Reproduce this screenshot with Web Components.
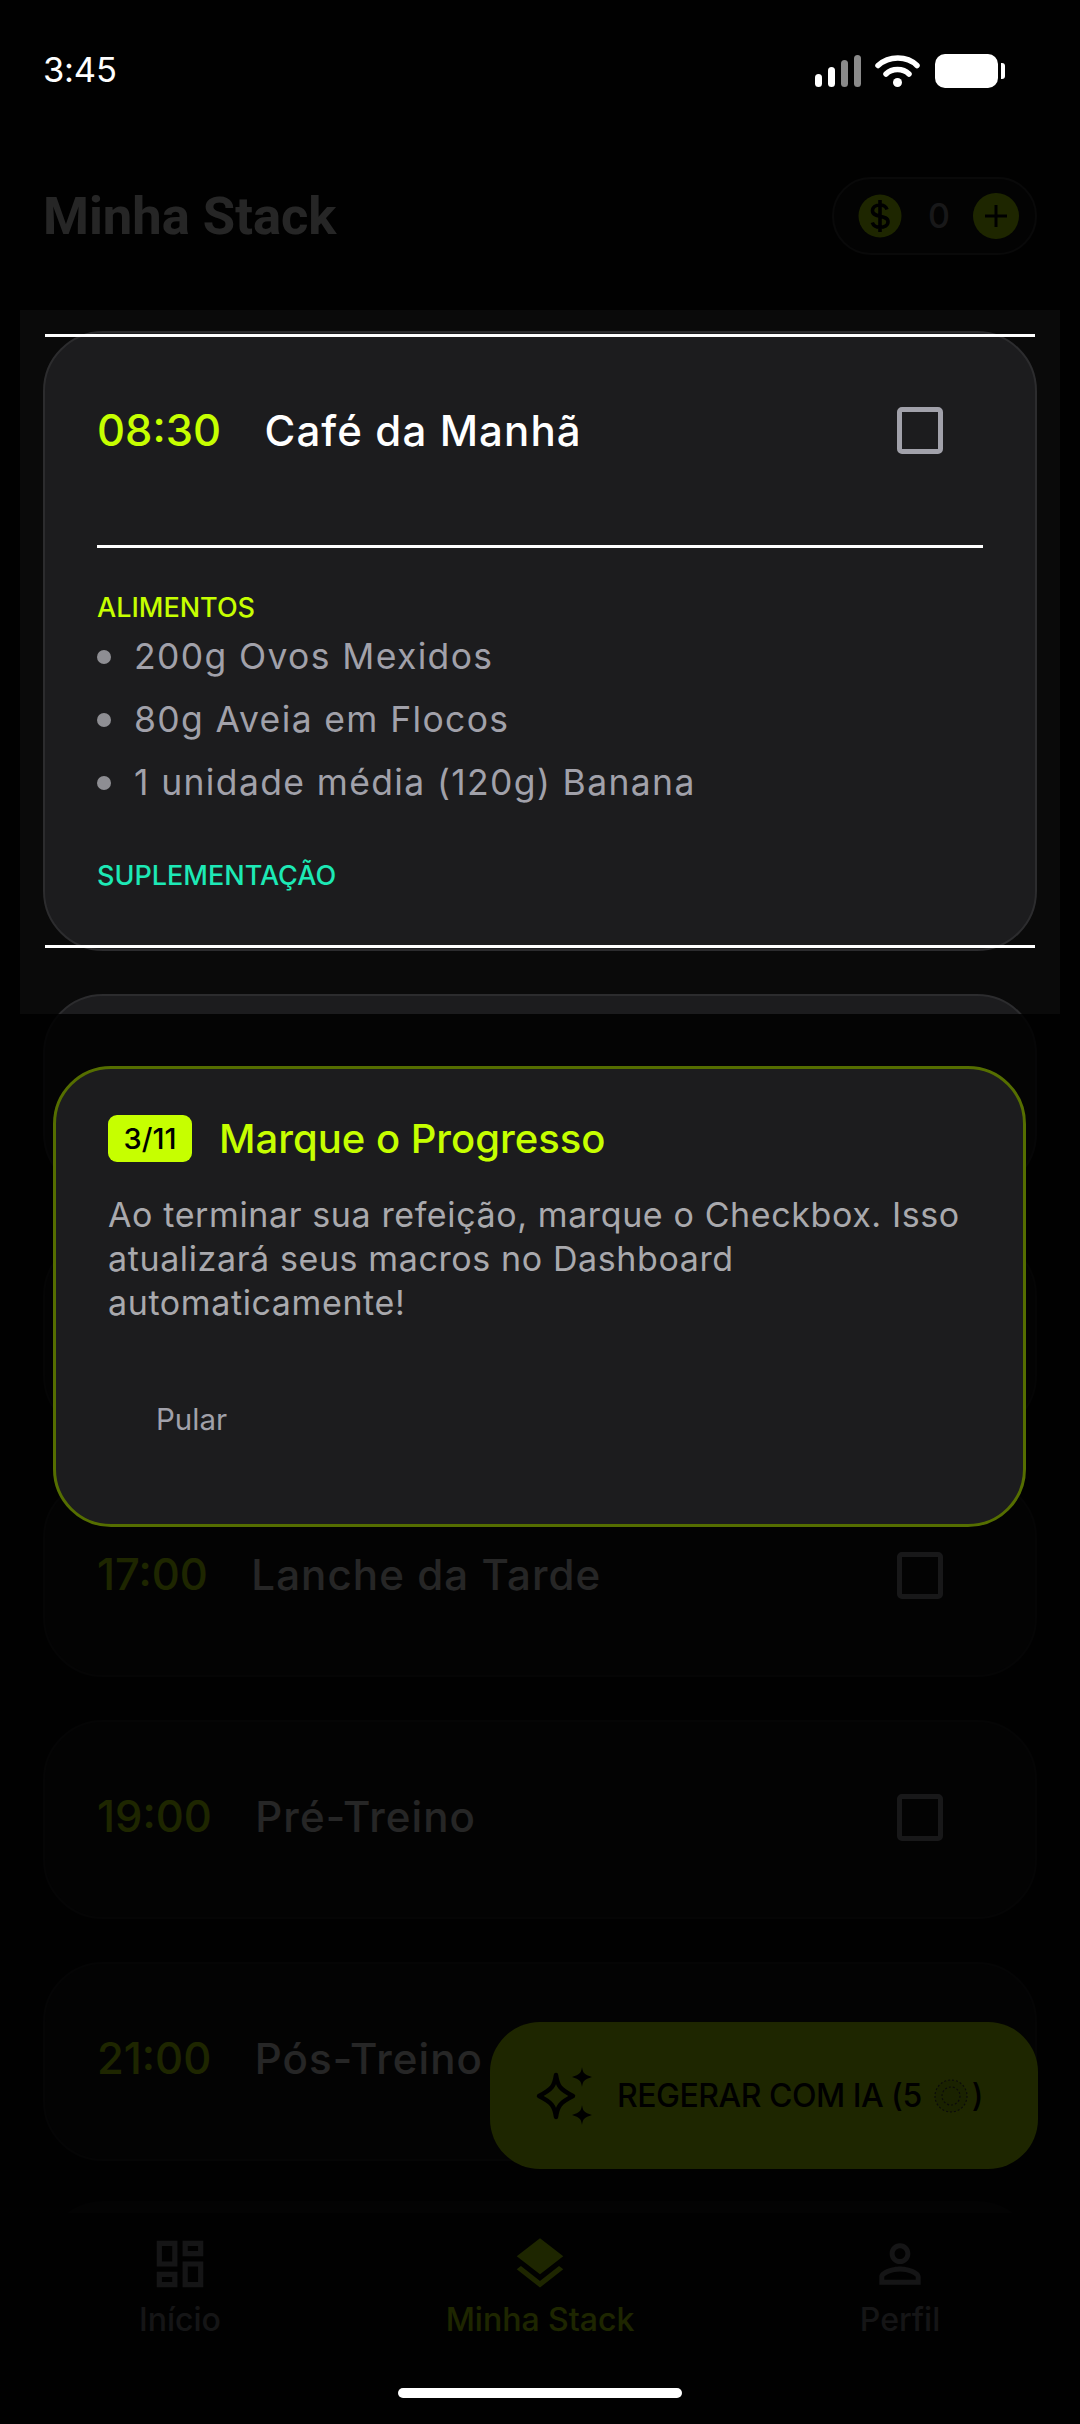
<!DOCTYPE html>
<html lang="pt-BR"><head><meta charset="utf-8"><title>Minha Stack</title>
<style>
html,body{margin:0;padding:0;background:#0a0a0a}
body{font-family:Inter,"Noto Sans",sans-serif}
</style></head><body>
<app-screen>
  <status-bar></status-bar>
  <app-header></app-header>
  <meal-list>
    <meal-card time="08:30" name="Café da Manhã" expanded>
      <food-item>200g Ovos Mexidos</food-item>
      <food-item>80g Aveia em Flocos</food-item>
      <food-item>1 unidade média (120g) Banana</food-item>
    </meal-card>
    <meal-card></meal-card>
    <meal-card dim></meal-card>
    <meal-card dim time="17:00" name="Lanche da Tarde"></meal-card>
    <meal-card dim time="19:00" name="Pré-Treino"></meal-card>
    <meal-card dim time="21:00" name="Pós-Treino"></meal-card>
  </meal-list>
  <regen-fab></regen-fab>
  <tab-bar></tab-bar>
  <coach-overlay></coach-overlay>
  <coach-tip></coach-tip>
  <home-indicator></home-indicator>
</app-screen>
<script>
function def(name, html){
  customElements.define(name, class extends HTMLElement{
    connectedCallback(){
      if(this.shadowRoot) return;
      const r=this.attachShadow({mode:'open'});
      r.innerHTML=typeof html==='function'?html(this):html;
    }
  });
}
def('app-screen',`<style>:host{display:flex;flex-direction:column;position:relative;width:1080px;height:2424px;overflow:hidden;background:#0a0a0a;color:#fff;font-family:Inter,"Noto Sans",sans-serif}</style><slot></slot>`);
def('status-bar',`<style>
:host{display:flex;position:relative;z-index:3;height:140px;flex:none;box-sizing:border-box;padding:0 75px 0 43px;justify-content:space-between;align-items:flex-start}
.t{font:400 34.500px/1 Inter,sans-serif;color:#fff;margin-top:53px;letter-spacing:-.2px}
svg{display:block;margin-top:54px}
</style><span class="t">3:45</span>
<svg width="192" height="34" viewBox="0 0 192 34">
<rect x="2" y="20" width="7" height="13" rx="3.5" fill="#fff"/><rect x="15" y="13" width="7" height="20" rx="3.5" fill="#fff"/>
<rect x="28" y="6" width="7" height="27" rx="3.5" fill="#8a8a8a"/><rect x="41" y="1" width="7" height="32" rx="3.5" fill="#8a8a8a"/>
<path d="M65 11.500C76 1.500 94 1.500 104 11.500" fill="none" stroke="#fff" stroke-width="5.500" stroke-linecap="round"/>
<path d="M73 20C79 14 90 14 96 20" fill="none" stroke="#fff" stroke-width="5.500" stroke-linecap="round"/>
<circle cx="84.500" cy="28.500" r="4.500" fill="#fff"/>
<rect x="122" y="0" width="63" height="34" rx="10" fill="#fff"/><path d="M188 9h1a3 3 0 0 1 3 3v10a3 3 0 0 1-3 3h-1z" fill="#fff"/>
</svg>`);
def('app-header',`<style>
:host{display:flex;flex:none;height:152px;box-sizing:border-box;padding:0 43px;align-items:center;justify-content:space-between}
h1{margin:0;font:700 52.500px/1 Roboto,sans-serif;color:#fff}
</style><h1>Minha Stack</h1><credit-pill></credit-pill>`);
def('credit-pill',`<style>
:host{display:flex;align-items:center;box-sizing:border-box;width:205px;height:78px;border:2px solid #3c3c3e;border-radius:39px;background:#141416;padding-left:24px}
.n{font:500 34px/1 Inter,sans-serif;color:#a1a1aa;width:68px;padding-left:3px;text-align:center}
svg{display:block;flex:none}
</style>
<svg width="44" height="44" viewBox="0 0 44 44"><circle cx="22" cy="22" r="21.500" fill="#c6ff00"/><path d="M29 15.500C28 12.500 25 11 22 11c-4 0-7.500 2-7.500 5.700 0 7.500 15.500 3.600 15.500 11 0 3.700-3.600 5.600-8 5.600-3.500 0-6.600-1.500-7.700-4.800M22 6v32" fill="none" stroke="#000" stroke-width="3.600"/></svg>
<span class="n">0</span>
<svg width="46" height="46" viewBox="0 0 46 46"><circle cx="23" cy="23" r="23" fill="#c6ff00"/><path d="M23 12v22M12 23h22" stroke="#000" stroke-width="3"/></svg>`);
def('meal-list',`<style>:host{display:flex;flex-direction:column;gap:43px;flex:1;min-height:0;box-sizing:border-box;padding:39px 43px 0}</style><slot></slot>`);
def('meal-card',el=>{
  const exp=el.hasAttribute('expanded'), t=el.getAttribute('time'), n=el.getAttribute('name'), d=el.hasAttribute('dim');
  return `<style>
:host{display:block;position:relative;flex:none;box-sizing:border-box;min-height:199px;background:${d?'#141416':'#1c1c1e'};border:2px solid ${d?'#222224':'#2c2c2e'};border-radius:60px;padding:53px 52px ${exp?'56px':'53px'} 53px}
.hd{display:flex;align-items:center;height:89px;box-sizing:border-box;padding-bottom:${exp?0:5}px;gap:44px}
.time{font:500 43.500px/1 Inter,sans-serif;color:#c6ff00;margin-left:-1px}
.name{font:500 42px/1 Inter,sans-serif;color:#fff;letter-spacing:1.1px;flex:1;margin-left:-.5px}
.cb{width:46px;height:47px;box-sizing:border-box;border:5px solid #a1a1aa;border-radius:5px;margin-right:40px}
hr{border:0;height:3px;background:#fff;margin:70px 0 0 -1px}
.lb{font:500 27px/34px Inter,sans-serif;color:#c6ff00;margin-left:-1px}
.a{margin-top:43px}
.s{margin-top:45px;color:#1de9b6}
.ln{position:absolute;left:0;right:0;height:3px;background:#fff}
</style>
${t?`<div class="hd"><span class="time">${t}</span><span class="name">${n}</span><span class="cb"></span></div>`:''}
${exp?`<div class="ln" style="top:1px"></div><div class="ln" style="bottom:1px"></div><hr><div class="lb a">ALIMENTOS</div><slot></slot><div class="lb s">SUPLEMENTAÇÃO</div>`:''}`;
});
def('food-item',`<style>
:host{display:flex;align-items:center;height:63px;gap:23px;font:400 35.500px/1 Inter,sans-serif;color:#a1a1aa;letter-spacing:1.360px;margin-left:-1px}
i{width:14px;height:14px;border-radius:50%;background:#8e8e93;flex:none}
</style><i></i><span><slot></slot></span>`);
def('regen-fab',`<style>
:host{display:flex;position:absolute;left:490px;top:2022px;width:548px;height:147px;box-sizing:border-box;background:#c6ff00;border-radius:50px;align-items:center;padding-left:45px;color:#000}
svg{display:block;flex:none}
.t{font:500 32px/1 Inter,sans-serif;margin-left:22px;white-space:nowrap;display:flex;align-items:center;letter-spacing:-.5px}
.c{margin:0 4px 0 12px}
</style>
<svg width="60" height="62" viewBox="0 0 60 62"><path d="M21 10C22.500 21 25 24.500 38 31 25 37.500 22.500 41 21 52 19.500 41 17 37.500 4 31 17 24.500 19.500 21 21 10Z" fill="none" stroke="#000" stroke-width="4.500" stroke-linejoin="round"/><path d="M47 2C48 8 49 9.500 57 12 49 14.500 48 16 47 22 46 16 45 14.500 37 12 45 9.500 46 8 47 2ZM47 40C48 46 49 47.500 57 50 49 52.500 48 54 47 60 46 54 45 52.500 37 50 45 47.500 46 46 47 40Z" fill="#000"/></svg>
<span class="t">REGERAR COM IA (5<svg class="c" width="34" height="34" viewBox="0 0 34 34"><circle cx="17" cy="17" r="16" fill="#000" fill-opacity=".12" stroke="#444" stroke-width="1.200" stroke-dasharray="2 2"/><circle cx="17" cy="17" r="9" fill="none" stroke="#444" stroke-width="1.200" stroke-dasharray="2 2"/></svg>)</span>`);
def('tab-bar',`<style>
:host{display:block;flex:none;height:223px;box-sizing:border-box}
.strip{height:12px;margin:0 43px;overflow:hidden}
.strip i{display:block;height:120px;background:#141416;border-radius:60px}
.g{display:grid;grid-template-columns:repeat(3,1fr);padding-top:20px}
</style>
<div class="strip"><i></i></div>
<div class="g">
<tab-item label="Início"><svg viewBox="0 0 24 24" width="62" height="62" fill="currentColor"><path d="M19 5v2h-4V5h4M9 5v6H5V5h4m10 8v6h-4v-6h4M9 17v2H5v-2h4M21 3h-8v6h8V3zM11 3H3v10h8V3zm10 8h-8v10h8V11zM11 15H3v6h8v-6z"/></svg></tab-item>
<tab-item label="Minha Stack" active><svg viewBox="0 0 24 24" width="62" height="62" fill="currentColor"><path d="M11.990 18.540l-7.370-5.730L3 14.070l9 7 9-7-1.630-1.270-7.380 5.740zM12 16l7.360-5.730L21 9l-9-7-9 7 1.630 1.270L12 16z"/></svg></tab-item>
<tab-item label="Perfil"><svg viewBox="0 0 24 24" width="62" height="62" fill="currentColor"><path d="M12 5.900c1.160 0 2.100.94 2.100 2.100s-.94 2.100-2.100 2.100S9.900 9.160 9.900 8s.94-2.100 2.100-2.100m0 9c2.970 0 6.100 1.460 6.100 2.100v1.100H5.900V17c0-.64 3.130-2.100 6.100-2.100M12 4C9.790 4 8 5.790 8 8s1.790 4 4 4 4-1.790 4-4-1.790-4-4-4zm0 9c-2.670 0-8 1.340-8 4v3h16v-3c0-2.660-5.330-4-8-4z"/></svg></tab-item>
</div>`);
def('tab-item',el=>{
  const a=el.hasAttribute('active');
  return `<style>
:host{display:flex;flex-direction:column;align-items:center;color:${a?'#c6ff00':'#8e8e93'}}
.l{font:500 32px/40px Inter,sans-serif;margin-top:5px;white-space:nowrap}
</style><slot></slot><span class="l">${el.getAttribute('label')}</span>`;
});
def('coach-overlay',`<style>
:host{position:absolute;inset:0;z-index:2;overflow:hidden;pointer-events:none}
.hole{position:absolute;left:20px;top:310px;width:1040px;height:704px;box-shadow:0 0 0 3000px rgba(0,0,0,.85)}
</style><div class="hole"></div>`);
def('coach-tip',`<style>
:host{display:block;position:absolute;z-index:3;left:53px;top:1066px;width:973px;height:461px;box-sizing:border-box;background:#1c1c1e;border:3px solid #556e00;border-radius:58px;padding:46px 52px}
.r{display:flex;align-items:center;gap:27px}
.b{display:flex;align-items:center;justify-content:center;width:84px;height:47px;background:#c6ff00;border-radius:9px;font:500 29px/1 Inter,sans-serif;color:#000}
h2{margin:0;font:500 40px/1 Inter,sans-serif;color:#c6ff00}
p{margin:31px 0 0;font:400 34px/44px Inter,sans-serif;color:#a9a9ad;letter-spacing:.61px}
.s{margin:78px 0 0 48px;font:400 29.500px/32px Inter,sans-serif;color:#a1a1aa}
</style>
<div class="r"><span class="b">3/11</span><h2>Marque o Progresso</h2></div>
<p>Ao terminar sua refeição, marque o Checkbox. Isso atualizará seus macros no Dashboard automaticamente!</p>
<div class="s">Pular</div>`);
def('home-indicator',`<style>:host{display:block;position:absolute;z-index:3;left:398px;top:2388px;width:284px;height:10px;border-radius:5px;background:#fff}</style>`);
</script>
</body></html>
